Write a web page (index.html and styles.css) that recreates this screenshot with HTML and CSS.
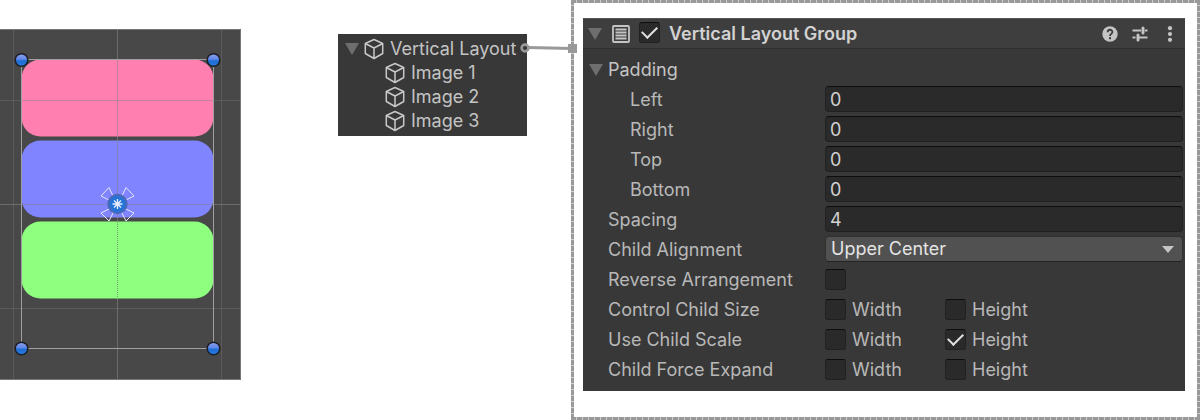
FILE: index.html
```html
<!DOCTYPE html>
<html lang="en">
<head>
    <meta charset="UTF-8">
    <meta name="viewport" content="width=device-width, initial-scale=1.0">
    <title>Vertical Layout Group</title>
    <link rel="stylesheet" href="styles.css">
</head>
<body>
    <!-- shared icons -->
    <svg class="defs" width="0" height="0">
        <symbol id="cube" viewBox="0 0 20 22">
            <path d="M10 1.5 18.7 5.5V15.5L10 20.5 1.3 15.5V5.5ZM1.3 5.5 10 10 18.7 5.5M10 10V20.5" fill="none" stroke="#c8c8c8" stroke-width="1.5" stroke-linejoin="round"/>
        </symbol>
        <symbol id="fold" viewBox="0 0 14 12">
            <path d="M0 0H14L7 12Z" fill="#6e6e6e"/>
        </symbol>
    </svg>

    <div class="page">
        <!-- scene view -->
        <svg class="scene" viewBox="0 0 241 351">
            <defs>
                <linearGradient id="ball" x1="0" y1="0" x2="0" y2="1">
                    <stop offset="0" stop-color="#8fa0f0"/>
                    <stop offset="0.45" stop-color="#5f86e8"/>
                    <stop offset="0.55" stop-color="#1f6fd8"/>
                    <stop offset="1" stop-color="#2878e0"/>
                </linearGradient>
            </defs>
            <rect width="241" height="351" fill="#474847"/>
            <path d="M13.5 0V351M221.5 0V351M0 71.5H241M0 279.5H241" stroke="#5a5b5a"/>
            <path d="M117.5 0V351M0 175.5H241" stroke="#6c6c6c"/>
            <rect x="21.5" y="30.5" width="192" height="77" rx="19" fill="#ff80b0"/>
            <rect x="21.5" y="111.5" width="192" height="77" rx="19" fill="#8085ff"/>
            <rect x="21.5" y="192.5" width="192" height="77" rx="19" fill="#8fff80"/>
            <path d="M22 71.5H213M117.5 31V107" stroke="#808080" stroke-opacity="0.45"/>
            <path d="M22 175.5H213M117.5 112V188" stroke="#808080" stroke-opacity="0.5"/>
            <path d="M117.5 193V269" stroke="#606060" stroke-opacity="0.6" stroke-dasharray="1 1"/>
            <rect x="21.5" y="30.5" width="192" height="289" fill="none" stroke="#a0a0a0"/>
            <path d="M0 0.5H240.5V350.5H0" fill="none" stroke="#777"/>
            <g fill="url(#ball)" stroke="#1c2026" stroke-width="1.5">
                <circle cx="21.5" cy="31" r="6.3"/>
                <circle cx="213.5" cy="31" r="6.3"/>
                <circle cx="21.5" cy="319.5" r="6.3"/>
                <circle cx="213.5" cy="319.5" r="6.3"/>
            </g>
            <g fill="none" stroke="#e4e6ff" stroke-width="1">
                <path d="M101 167 109 158.5 113 167 109 171Z"/>
                <path d="M134 167 126 158.5 122 167 126 171Z"/>
                <path d="M101 184 109 192 113 184 109 180Z"/>
                <path d="M134 184 126 192 122 184 126 180Z"/>
            </g>
            <circle cx="117.5" cy="175" r="9.2" fill="#2474d8" stroke="#4d68b8" stroke-width="2"/>
            <path d="M117.5 170V180M112.5 175H122.5M114 171.5 121 178.5M121 171.5 114 178.5" stroke="#e8ecff" stroke-width="1.4"/>
        </svg>

        <!-- hierarchy -->
        <div class="hierarchy">
            <ul class="tree">
                <li class="node"><svg class="fold"><use href="#fold"/></svg><svg class="cube"><use href="#cube"/></svg>Vertical Layout</li>
                <li class="node child"><svg class="cube"><use href="#cube"/></svg>Image 1</li>
                <li class="node child"><svg class="cube"><use href="#cube"/></svg>Image 2</li>
                <li class="node child"><svg class="cube"><use href="#cube"/></svg>Image 3</li>
            </ul>
            <svg class="link" viewBox="0 0 60 12">
                <path d="M8 5.5 52 6.5" stroke="#999" stroke-width="3"/>
                <circle cx="5" cy="6" r="3.4" fill="#383838" stroke="#999" stroke-width="2.6"/>
                <rect x="48" y="2" width="9" height="9" fill="#999"/>
            </svg>
        </div>

        <!-- inspector -->
        <div class="frame">
            <form class="inspector">
                <div class="header">
                    <svg class="fold"><use href="#fold"/></svg>
                    <svg class="group-icon" viewBox="0 0 18 18">
                        <rect x="1" y="1" width="16" height="16" rx="1" fill="none" stroke="#c4c4c4" stroke-width="1.8"/>
                        <path d="M3.5 4.5H14.5M3.5 7.5H14.5M3.5 10.5H14.5M3.5 13.5H14.5" stroke="#c4c4c4" stroke-width="2"/>
                    </svg>
                    <input type="checkbox" class="check" id="enabled" checked>
                    <label class="title" for="enabled">Vertical Layout Group</label>
                    <button type="button" class="tool" aria-label="Help">
                        <svg viewBox="0 0 16 16">
                            <circle cx="8" cy="8" r="7.7" fill="#c4c4c4"/>
                            <path d="M5.6 6.3C5.6 2.9 10.4 3 10.4 6.1 10.4 7.9 8 7.9 8 10" fill="none" stroke="#3c3c3c" stroke-width="1.8"/>
                            <rect x="7" y="11.2" width="2" height="2" fill="#3c3c3c"/>
                        </svg>
                    </button>
                    <button type="button" class="tool" aria-label="Presets">
                        <svg viewBox="0 0 16 16">
                            <path d="M0.5 4.5H9M13 4.5H15.5M0.5 11.5H3.5M7 11.5H15.5" stroke="#c4c4c4" stroke-width="1.8"/>
                            <path d="M11 2V7M6 9V14" stroke="#c4c4c4" stroke-width="3" stroke-linecap="round"/>
                        </svg>
                    </button>
                    <button type="button" class="tool" aria-label="More">
                        <svg viewBox="0 0 16 16">
                            <g fill="#c4c4c4"><circle cx="8" cy="2.2" r="2.1"/><circle cx="8" cy="8" r="2.1"/><circle cx="8" cy="13.8" r="2.1"/></g>
                        </svg>
                    </button>
                </div>

                <div class="fields">
                    <div class="row foldout"><svg class="fold"><use href="#fold"/></svg>Padding</div>
                    <div class="row sub">
                        <label for="left">Left</label>
                        <input type="text" class="text" id="left" value="0">
                    </div>
                    <div class="row sub">
                        <label for="right">Right</label>
                        <input type="text" class="text" id="right" value="0">
                    </div>
                    <div class="row sub">
                        <label for="top">Top</label>
                        <input type="text" class="text" id="top" value="0">
                    </div>
                    <div class="row sub">
                        <label for="bottom">Bottom</label>
                        <input type="text" class="text" id="bottom" value="0">
                    </div>
                    <div class="row">
                        <label for="spacing">Spacing</label>
                        <input type="text" class="text" id="spacing" value="4">
                    </div>
                    <div class="row">
                        <label for="alignment">Child Alignment</label>
                        <div class="dropdown">
                            <select id="alignment">
                                <option>Upper Left</option>
                                <option selected>Upper Center</option>
                                <option>Upper Right</option>
                            </select>
                            <svg class="arrow" viewBox="0 0 12 7"><path d="M0 0H12L6 7Z" fill="#c4c4c4"/></svg>
                        </div>
                    </div>
                    <div class="row">
                        <label for="reverse">Reverse Arrangement</label>
                        <input type="checkbox" class="check" id="reverse">
                    </div>
                    <div class="row">
                        <span>Control Child Size</span>
                        <div class="pair">
                            <label><input type="checkbox" class="check">Width</label>
                            <label><input type="checkbox" class="check">Height</label>
                        </div>
                    </div>
                    <div class="row">
                        <span>Use Child Scale</span>
                        <div class="pair">
                            <label><input type="checkbox" class="check">Width</label>
                            <label><input type="checkbox" class="check" checked>Height</label>
                        </div>
                    </div>
                    <div class="row">
                        <span>Child Force Expand</span>
                        <div class="pair">
                            <label><input type="checkbox" class="check">Width</label>
                            <label><input type="checkbox" class="check">Height</label>
                        </div>
                    </div>
                </div>
            </form>
        </div>
    </div>
</body>
</html>
```

FILE: styles.css
```css
* {
    box-sizing: border-box;
    margin: 0;
    padding: 0;
}

body {
    font-family: Inter, "Liberation Sans", sans-serif;
    font-size: 18px;
    line-height: 24px;
    color: #c4c4c4;
    background: #fff;
}

.defs {
    position: absolute;
}

.page {
    display: flex;
    align-items: flex-start;
}

.scene {
    flex: none;
    width: 241px;
    margin-top: 29px;
}

/* hierarchy */
.hierarchy {
    position: relative;
    flex: none;
    margin: 34px 44px 0 97px;
}

.tree {
    width: 189px;
    padding: 3px 0 3px 7px;
    list-style: none;
    background: #383838;
}

.node {
    display: flex;
    align-items: center;
    white-space: nowrap;
}

.child {
    padding-left: 40px;
}

.fold {
    flex: none;
    width: 14px;
    height: 12px;
}

.cube {
    flex: none;
    width: 20px;
    height: 22px;
    margin-right: 6px;
}

.fold + .cube {
    margin-left: 5px;
}

/* line from the object to its component */
.link {
    position: absolute;
    left: 182px;
    top: 8px;
    width: 60px;
    height: 12px;
}

/* inspector */
.frame {
    flex: 1;
    padding: 18px 15px 29px 12px;
    background:
        repeating-linear-gradient(90deg, #999 0 5px, #ccc 5px 6px) top / 100% 3px no-repeat,
        repeating-linear-gradient(90deg, #999 0 5px, #ccc 5px 6px) bottom / 100% 3px no-repeat,
        repeating-linear-gradient(#999 0 5px, #ccc 5px 6px) left / 3px 100% no-repeat,
        repeating-linear-gradient(#999 0 5px, #ccc 5px 6px) right / 3px 100% no-repeat;
}

.inspector {
    background: #383838;
}

.header {
    display: flex;
    align-items: center;
    height: 31px;
    padding: 0 7px 0 5px;
    background: #3e3e3e;
    border-top: 1px solid #555;
    border-bottom: 1px solid #303030;
}

.group-icon {
    width: 18px;
    height: 18px;
    margin: 0 9px 0 10px;
}

.title {
    flex: 1;
    margin-left: 9px;
    font-weight: 600;
    color: #d2d2d2;
}

.tool {
    width: 16px;
    height: 16px;
    margin-left: 14px;
    border: none;
    background: none;
}

.tool svg {
    display: block;
}

.fields {
    padding: 6px 2px 6px 25px;
    color: #b8b8b8;
}

.row {
    display: grid;
    grid-template-columns: 217px 1fr;
    align-items: center;
    height: 30px;
}

.foldout {
    display: flex;
    gap: 5px;
    margin-left: -19px;
    color: #c4c4c4;
}

.sub {
    grid-template-columns: 195px 1fr;
    padding-left: 22px;
}

.text {
    width: 100%;
    height: 26px;
    margin-bottom: 2px;
    padding: 0 4px;
    font: inherit;
    color: #d2d2d2;
    background: #2a2a2a;
    border: 1px solid #212121;
    border-top: 1px solid #0d0d0d;
    border-radius: 4px;
}

.dropdown {
    position: relative;
    margin-bottom: 2px;
}

.dropdown select {
    display: block;
    width: 100%;
    height: 26px;
    padding: 0 5px;
    font: inherit;
    color: #e4e4e4;
    background: #515151;
    border: 1px solid #303030;
    border-bottom-color: #242424;
    border-radius: 4px;
    appearance: none;
}

.arrow {
    position: absolute;
    right: 9px;
    top: 10px;
    width: 12px;
    height: 7px;
}

.check {
    flex: none;
    display: grid;
    place-items: center;
    width: 21px;
    height: 21px;
    margin-bottom: 2px;
    background: #2a2a2a;
    border: 1px solid #212121;
    border-top-color: #0d0d0d;
    border-radius: 3px;
    appearance: none;
}

.check:checked::before {
    content: "";
    width: 13px;
    height: 7px;
    border: solid #e0e0e0;
    border-width: 0 0 2px 2px;
    transform: translateY(-2px) rotate(-45deg);
}

.pair {
    display: grid;
    grid-template-columns: 120px 1fr;
}

.pair label {
    display: flex;
    align-items: center;
    gap: 6px;
}
```
